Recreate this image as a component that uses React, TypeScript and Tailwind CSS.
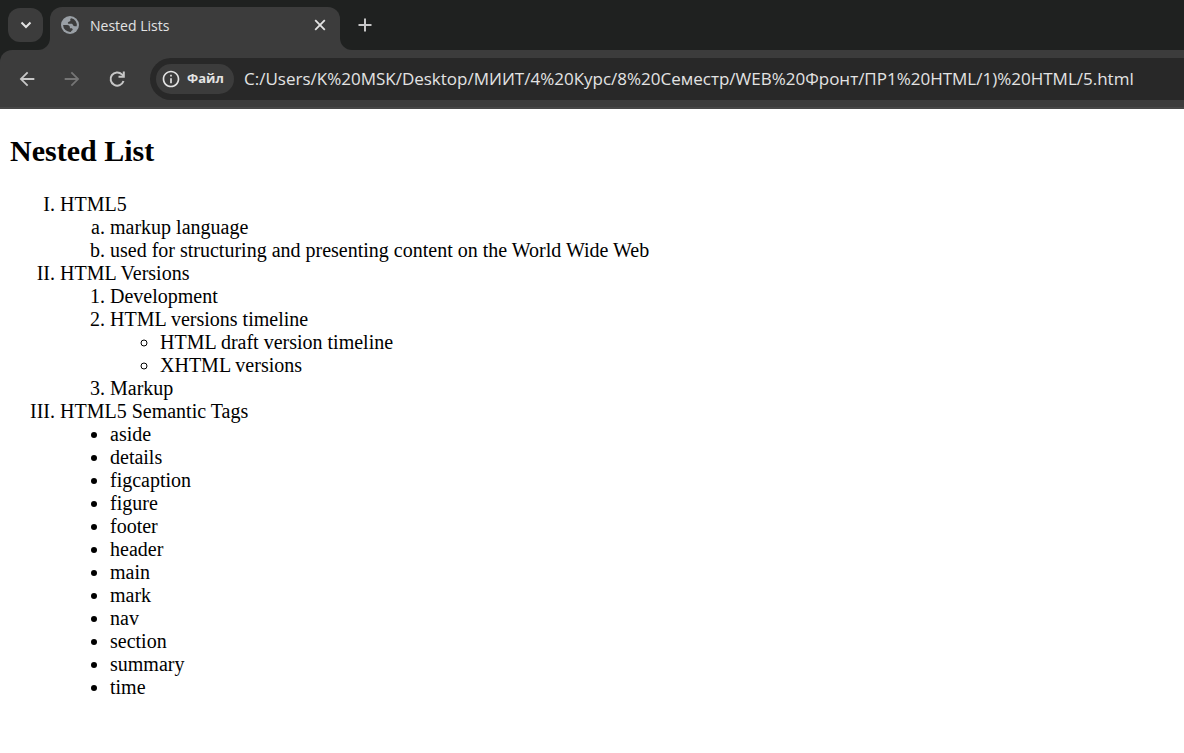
import type { ReactNode } from "react";
import { MdInfoOutline, MdArrowBack, MdArrowForward } from "react-icons/md";

const tags = [
  "aside", "details", "figcaption", "figure", "footer", "header",
  "main", "mark", "nav", "section", "summary", "time",
];

const address =
  "C:/Users/K%20MSK/Desktop/МИИТ/4%20Курс/8%20Семестр/WEB%20Фронт/ПР1%20HTML/1)%20HTML/5.html";

function GlobeIcon() {
  return (
    <svg viewBox="0 0 20 20" className="size-5 shrink-0 text-[#9aa0a6]" aria-hidden="true">
      <circle cx="10" cy="10" r="9" fill="currentColor" />
      <path
        d="M11.5 3.2c-.8.2-1.3.8-1.3 1.4 0 .5.2.7.2 1.2 0 .8-2.2.7-2.5 1.7-.2.8.3 1.3 1.1 1.3h2.3c1.1 0 1.5.7 1.8 1.5.3.7.9 1 1.8 1h1.8A7 7 0 0 0 11.5 3.2z"
        fill="#3c3c3c"
      />
      <path
        d="M3.1 10h4.1c1.7 0 2.7 1 2.7 2.3v.9h1.3c.9 0 1.5.6 1.5 1.3 0 1.1-1.5 1.1-2 2.4A7 7 0 0 1 3.1 10z"
        fill="#3c3c3c"
      />
    </svg>
  );
}

function ReloadIcon() {
  return (
    <svg viewBox="0 0 22 22" className="size-[22px]" fill="none" stroke="currentColor" strokeWidth="2" aria-hidden="true">
      <path d="M17.5 13A6.6 6.6 0 1 1 15.9 6.400L17.5 8" />
      <path d="M17.8 3.5V8.800H12.5" />
    </svg>
  );
}

function ToolButton({ label, children, disabled }: { label: string; children: ReactNode; disabled?: boolean }) {
  return (
    <button
      type="button"
      aria-label={label}
      disabled={disabled}
      className="flex size-9 items-center justify-center rounded-full text-[#c7c7c7] disabled:text-[#757575]"
    >
      {children}
    </button>
  );
}

function TabStrip() {
  return (
    <div className="flex h-[50px] bg-[#3c3c3c]">
      <div className="w-[50px] shrink-0 rounded-br-xl bg-[#1f2120] pt-2 pl-2">
        <button
          type="button"
          aria-label="Search tabs"
          className="flex h-[34px] w-[35px] items-center justify-center rounded-xl bg-[#3c3c3c] text-[#e3e3e3]"
        >
          <svg viewBox="0 0 12 8" className="h-2 w-3" fill="none" stroke="currentColor" strokeWidth="2">
            <path d="M1.5 1.5 6 6l4.5-4.5" />
          </svg>
        </button>
      </div>
      <div className="w-[290px] shrink-0 bg-[#1f2120] pt-[7px]">
        <div className="flex h-full items-start rounded-t-xl bg-[#3c3c3c] px-[10px] pt-2">
          <GlobeIcon />
          <span className="flex-1 pl-[10px] font-['Open_Sans',sans-serif] text-sm leading-[22px] text-[#e3e3e3]">
            Nested Lists
          </span>
          <button type="button" aria-label="Close tab" className="flex size-5 items-center justify-center text-[#e3e3e3]">
            <svg viewBox="0 0 12 12" className="size-3" stroke="currentColor" strokeWidth="1.8">
              <path d="M1.2 1.2l9.6 9.6M10.8 1.2l-9.6 9.6" />
            </svg>
          </button>
        </div>
      </div>
      <div className="flex-1 rounded-bl-xl bg-[#1f2120] pt-[15px] pl-[15px]">
        <button type="button" aria-label="New tab" className="flex size-5 items-center justify-center text-[#c7c7c7]">
          <svg viewBox="0 0 14 14" className="size-3.5" stroke="currentColor" strokeWidth="2">
            <path d="M7 0.5v13M0.5 7h13" />
          </svg>
        </button>
      </div>
    </div>
  );
}

function Toolbar() {
  return (
    <div className="bg-[#1f2120]">
      <div className="flex h-[59px] items-center rounded-tl-xl border-b-2 border-[#474747] bg-[#3c3c3c] pl-[9px]">
        <div className="flex gap-[9px]">
          <ToolButton label="Back"><MdArrowBack className="size-[22px]" /></ToolButton>
          <ToolButton label="Forward" disabled><MdArrowForward className="size-[22px]" /></ToolButton>
          <ToolButton label="Reload"><ReloadIcon /></ToolButton>
        </div>
        <div className="ml-[15px] flex h-[42px] flex-1 items-center rounded-l-full bg-[#282828] pl-1.5">
          <button
            type="button"
            className="flex h-[30px] w-[78px] items-center gap-1.5 rounded-full bg-[#3c3c3c] pl-[5px] text-[#e3e3e3]"
          >
            <MdInfoOutline className="size-5 shrink-0" />
            <span className="font-['Open_Sans',sans-serif] text-[13px] font-bold">Файл</span>
          </button>
          <input
            type="text"
            aria-label="Address"
            defaultValue={address}
            spellCheck={false}
            className="ml-[10px] min-w-0 flex-1 bg-transparent font-['Open_Sans',sans-serif] text-[17px] text-[#e3e3e3] outline-none"
          />
        </div>
      </div>
    </div>
  );
}

export default function App() {
  return (
    <div className="min-h-screen bg-white">
      <header>
        <TabStrip />
        <Toolbar />
      </header>
      <main className="px-[10px] pt-[25px] font-['Liberation_Serif',serif] text-[20px] leading-[23px] text-black">
        <h2 className="mb-[25px] text-[30px] leading-[34px] font-bold">Nested List</h2>
        <ol className="list-[upper-roman] pl-[50px]">
          <li>
            HTML5
            <ol className="list-[lower-alpha] pl-[50px]">
              <li>markup language</li>
              <li>used for structuring and presenting content on the World Wide Web</li>
            </ol>
          </li>
          <li>
            HTML Versions
            <ol className="list-decimal pl-[50px]">
              <li>Development</li>
              <li>
                HTML versions timeline
                <ul className="list-[circle] pl-[50px]">
                  <li>HTML draft version timeline</li>
                  <li>XHTML versions</li>
                </ul>
              </li>
              <li>Markup</li>
            </ol>
          </li>
          <li>
            HTML5 Semantic Tags
            <ul className="list-disc pl-[50px]">
              {tags.map((tag) => (
                <li key={tag}>{tag}</li>
              ))}
            </ul>
          </li>
        </ol>
      </main>
    </div>
  );
}
